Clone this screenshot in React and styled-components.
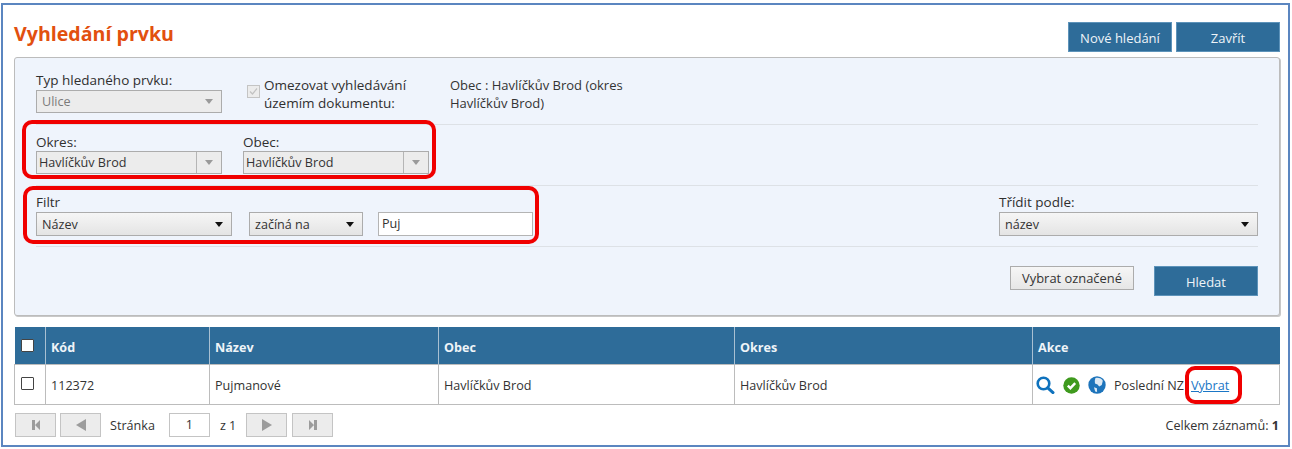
import React from 'react';
import styled, { createGlobalStyle } from 'styled-components';

const GlobalStyle = createGlobalStyle`
  html, body { margin: 0; padding: 0; background: #fff; }
  body { font-family: 'Open Sans', 'Noto Sans', sans-serif; font-size: 12.6px; color: #333; }
`;

const Frame = styled.div`
  box-sizing: border-box;
  position: relative;
  width: 1289px;
  height: 444px;
  margin: 3px 0 0 1px;
  border: 2px solid #5b86c0;
  padding: 17px 8px 0 11px;
`;

// Header
const Header = styled.div`
  display: flex;
  justify-content: space-between;
  height: 30px;
`;

const Title = styled.h1`
  margin: 0;
  font-size: 19.6px;
  font-weight: 700;
  line-height: 24px;
  color: #e2500f;
`;

const HeaderButtons = styled.div`
  display: flex;
  gap: 4px;
`;

const PrimaryButton = styled.button`
  box-sizing: border-box;
  width: 104px;
  height: 30px;
  border: 1px solid #5d93ba;
  background: #2e6c99;
  color: #eef4f8;
  font: 13px 'Open Sans', sans-serif;
  padding: 1px 0 0;
`;

// Search panel
const Panel = styled.div`
  box-sizing: border-box;
  height: 259px;
  margin-top: 5px;
  padding: 0 21px;
  background: #eff4fc;
  border: 1px solid #bcbcbc;
  border-radius: 3px;
  box-shadow: 1px 1px 0 #c8c8c8;
`;

const Row = styled.div`
  box-sizing: border-box;
  display: flex;
  align-items: flex-start;
  height: ${p => p.$h}px;
  padding-top: ${p => p.$pt}px;
  border-bottom: ${p => (p.$last ? 'none' : '1px solid #dde1e6')};
  justify-content: ${p => (p.$end ? 'flex-end' : 'flex-start')};
`;

const Field = styled.div`
  width: ${p => p.$w}px;
  margin-right: ${p => p.$mr || 0}px;
  margin-left: ${p => (p.$auto ? 'auto' : 0)};
`;

const Label = styled.div`
  height: ${p => p.$h || 17}px;
  line-height: 17px;
  font-size: 13.5px;
  color: #2f2f2f;
`;

const Select = styled.div`
  box-sizing: border-box;
  display: flex;
  align-items: center;
  height: ${p => p.$h || 23}px;
  width: ${p => (p.$w ? `${p.$w}px` : '100%')};
  margin-right: ${p => p.$mr || 0}px;
  padding-left: ${p => p.$pl ?? 5}px;
  border: 1px solid #acacac;
  background: ${p => (p.$disabled ? '#ececec' : 'linear-gradient(#f6f6f6, #e4e4e4)')};
  color: ${p => (p.$muted ? '#7b7b7b' : '#333')};
`;

const SelectText = styled.span`
  flex: 1;
`;

const ArrowCell = styled.span`
  display: flex;
  align-items: center;
  justify-content: center;
  align-self: stretch;
  width: ${p => p.$w}px;
  border-left: ${p => (p.$divider ? '1px solid #b5b5b5' : 'none')};
`;

const Arrow = styled.i`
  width: 0;
  height: 0;
  border-left: 4px solid transparent;
  border-right: 4px solid transparent;
  border-top: 5px solid ${p => (p.$dark ? '#111' : '#9a9a9a')};
`;

const FilterInput = styled.div`
  box-sizing: border-box;
  width: 155px;
  height: 24px;
  padding-left: 3px;
  line-height: 22px;
  background: #fff;
  border: 1px solid #b4b4b4;
`;

const CheckWrap = styled.div`
  display: flex;
  width: 203px;
  margin-left: 25px;
  padding-top: 5px;
`;

const DisabledCheck = styled.span`
  box-sizing: border-box;
  display: flex;
  align-items: center;
  justify-content: center;
  flex: none;
  width: 13px;
  height: 13px;
  margin: 8px 4px 0 0;
  border: 1px solid #c4c4c4;
  background: #ececec;
`;

const CheckLabel = styled.div`
  font-size: 13.5px;
  line-height: 17.5px;
  color: #2f2f2f;
`;

const InfoText = styled.div`
  width: 200px;
  padding-top: 5px;
  font-size: 13px;
  line-height: 17.5px;
  color: #333;
`;

const GreyButton = styled.button`
  box-sizing: border-box;
  width: 124px;
  height: 24px;
  margin-right: 20px;
  padding: 0;
  border: 1px solid #acacac;
  background: linear-gradient(#f6f6f6, #e6e6e6);
  color: #333;
  font: 12.9px 'Open Sans', sans-serif;
`;

// Results table
const Table = styled.table`
  box-sizing: border-box;
  width: 1266px;
  margin-top: 11px;
  table-layout: fixed;
  border-collapse: collapse;
  font-size: 12.6px;
`;

const Th = styled.th`
  height: 34px;
  padding: 3px 5px 0;
  text-align: left;
  font-weight: 700;
  color: #eef4f8;
  background: #2e6c99;
  border-left: 1px solid #a9c0d2;
  &:first-child { border-left: none; }
`;

const Td = styled.td`
  height: 38px;
  padding: 1px 5px 0;
  white-space: nowrap;
  overflow: hidden;
  border: 1px solid #bcbcbc;
`;

const Box = styled.span`
  display: block;
  box-sizing: border-box;
  width: 13px;
  height: 13px;
  margin: -3px 0 0 1px;
  background: #fff;
  border: 1px solid #444;
  border-radius: 1px;
`;

const FilterRow = styled.div`
  display: flex;
  align-items: center;
`;

const ActionCell = styled.div`
  display: flex;
  align-items: center;
  margin-left: -2px;
`;

const IconSlot = styled.svg`
  flex: none;
  margin-right: 8px;
`;

const LastDoc = styled.span`
  width: 77px;
  overflow: hidden;
`;

const PickLink = styled.a`
  color: #1a76c6;
  text-decoration: underline;
`;

// Pager
const Pager = styled.div`
  display: flex;
  align-items: center;
  height: 24px;
  margin: 8px 0 0 1px;
`;

const PageBtn = styled.div`
  box-sizing: border-box;
  display: flex;
  align-items: center;
  justify-content: center;
  width: 41px;
  height: 24px;
  margin-right: ${p => p.$mr || 0}px;
  background: #ececec;
  border: 1px solid #c4c4c4;
`;

const PageLabel = styled.span`
  margin-right: ${p => p.$mr}px;
`;

const PageInput = styled.div`
  box-sizing: border-box;
  width: 41px;
  height: 24px;
  margin-right: 10px;
  line-height: 22px;
  text-align: center;
  background: #fff;
  border: 1px solid #c4c4c4;
`;

const Total = styled.div`
  margin-left: auto;
  margin-right: 1px;
  b { font-weight: 700; }
`;

// Red markers drawn over the form
const Marker = styled.div`
  position: absolute;
  box-sizing: border-box;
  left: ${p => p.$x}px;
  top: ${p => p.$y}px;
  width: ${p => p.$w}px;
  height: ${p => p.$h}px;
  border: 4px solid #f00000;
  border-radius: 10px;
`;

const PagerIcon = ({ d }) => (
  <svg width="12" height="12" viewBox="0 0 12 12"><path d={d} fill="#9c9c9c" /></svg>
);

const SearchIcon = () => (
  <IconSlot width="19" height="18" viewBox="0 0 19 18">
    <circle cx="7.5" cy="7.5" r="5.8" fill="none" stroke="#0f72bd" strokeWidth="2.6" />
    <path d="M11.8 11.8 L17 16.6" stroke="#0f72bd" strokeWidth="3" strokeLinecap="round" />
  </IconSlot>
);

const OkIcon = () => (
  <IconSlot width="17" height="17" viewBox="0 0 17 17">
    <circle cx="8.5" cy="8.5" r="8.2" fill="#3f9a1e" />
    <path d="M4.8 8.6 L7.4 11.2 L12.2 6.2" fill="none" stroke="#fff" strokeWidth="2.4" />
  </IconSlot>
);

const GlobeIcon = () => (
  <IconSlot width="18" height="18" viewBox="0 0 17 17">
    <circle cx="8.5" cy="8.5" r="8.2" fill="#1d74bb" />
    <path d="M7 2 C9.5 1 13 2.4 14 4.6 L13 8.4 L10.6 10 L9 8 L6.6 7.2 L6.4 4.4 Z M5.6 10.6 L8.4 11.6 L8.6 15 L6.8 14.6 Z" fill="#dce9f4" />
  </IconSlot>
);

const App = () => (
  <>
    <GlobalStyle />
    <Frame>
      <Header>
        <Title>Vyhledání prvku</Title>
        <HeaderButtons>
          <PrimaryButton>Nové hledání</PrimaryButton>
          <PrimaryButton>Zavřít</PrimaryButton>
        </HeaderButtons>
      </Header>

      <Panel>
        <Row $h={67} $pt={14}>
          <Field $w={186}>
            <Label $h={18}>Typ hledaného prvku:</Label>
            <Select $disabled $muted>
              <SelectText>Ulice</SelectText>
              <ArrowCell $w={24}><Arrow /></ArrowCell>
            </Select>
          </Field>
          <CheckWrap>
            <DisabledCheck>
              <svg width="11" height="11" viewBox="0 0 11 11">
                <path d="M2 5.5 L4.5 8 L9 2.5" fill="none" stroke="#c2c2c2" strokeWidth="1.2" />
              </svg>
            </DisabledCheck>
            <CheckLabel>Omezovat vyhledávání<br />územím dokumentu:</CheckLabel>
          </CheckWrap>
          <InfoText>Obec : Havlíčkův Brod (okres Havlíčkův Brod)</InfoText>
        </Row>

        <Row $h={61} $pt={9}>
          <Field $w={186} $mr={21}>
            <Label>Okres:</Label>
            <Select $disabled $pl={2}>
              <SelectText>Havlíčkův Brod</SelectText>
              <ArrowCell $w={24} $divider><Arrow /></ArrowCell>
            </Select>
          </Field>
          <Field $w={186}>
            <Label>Obec:</Label>
            <Select $disabled $pl={2}>
              <SelectText>Havlíčkův Brod</SelectText>
              <ArrowCell $w={24} $divider><Arrow /></ArrowCell>
            </Select>
          </Field>
        </Row>

        <Row $h={61} $pt={8}>
          <Field $w={497}>
            <Label $h={18}>Filtr</Label>
            <FilterRow>
              <Select $w={196} $mr={17} $h={24}>
                <SelectText>Název</SelectText>
                <ArrowCell $w={24}><Arrow $dark /></ArrowCell>
              </Select>
              <Select $w={114} $mr={15} $h={24}>
                <SelectText>začíná na</SelectText>
                <ArrowCell $w={24}><Arrow $dark /></ArrowCell>
              </Select>
              <FilterInput>Puj</FilterInput>
            </FilterRow>
          </Field>
          <Field $w={259} $auto>
            <Label $h={18}>Třídit podle:</Label>
            <Select $h={24}>
              <SelectText>název</SelectText>
              <ArrowCell $w={24}><Arrow $dark /></ArrowCell>
            </Select>
          </Field>
        </Row>

        <Row $h={60} $pt={19} $last $end>
          <GreyButton>Vybrat označené</GreyButton>
          <PrimaryButton>Hledat</PrimaryButton>
        </Row>
      </Panel>

      <Table>
        <colgroup>
          <col style={{ width: 31 }} />
          <col style={{ width: 164 }} />
          <col style={{ width: 229 }} />
          <col style={{ width: 296 }} />
          <col style={{ width: 298 }} />
          <col />
        </colgroup>
        <thead>
          <tr>
            <Th><Box /></Th>
            <Th>Kód</Th>
            <Th>Název</Th>
            <Th>Obec</Th>
            <Th>Okres</Th>
            <Th>Akce</Th>
          </tr>
        </thead>
        <tbody>
          <tr>
            <Td><Box /></Td>
            <Td>112372</Td>
            <Td>Pujmanové</Td>
            <Td>Havlíčkův Brod</Td>
            <Td>Havlíčkův Brod</Td>
            <Td>
              <ActionCell>
                <SearchIcon />
                <OkIcon />
                <GlobeIcon />
                <LastDoc>Poslední NZ</LastDoc>
                <PickLink href="#">Vybrat</PickLink>
              </ActionCell>
            </Td>
          </tr>
        </tbody>
      </Table>

      <Pager>
        <PageBtn $mr={4}><PagerIcon d="M2 1h3v10H2z M10 1v10L5 6z" /></PageBtn>
        <PageBtn $mr={9}><PagerIcon d="M11 0v12L1 6z" /></PageBtn>
        <PageLabel $mr={14}>Stránka</PageLabel>
        <PageInput>1</PageInput>
        <PageLabel $mr={10}>z 1</PageLabel>
        <PageBtn $mr={5}><PagerIcon d="M1 0v12l10-6z" /></PageBtn>
        <PageBtn><PagerIcon d="M2 1v10l5-5z M7 1h3v10H7z" /></PageBtn>
        <Total>Celkem záznamů: <b>1</b></Total>
      </Pager>

      <Marker $x={19} $y={115} $w={414} $h={59} />
      <Marker $x={20} $y={181} $w={516} $h={58} />
      <Marker $x={1182} $y={361} $w={57} $h={38} />
    </Frame>
  </>
);

export default App;
